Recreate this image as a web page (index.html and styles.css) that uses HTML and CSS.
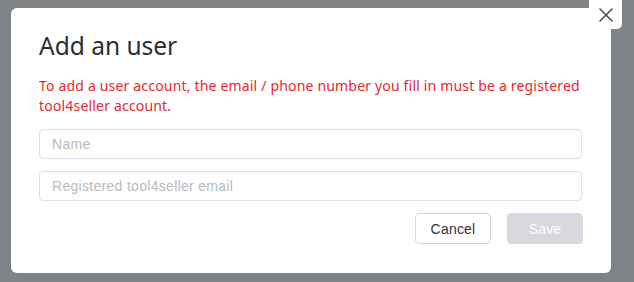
FILE: index.html
```html
<!DOCTYPE html>
<html lang="en">
  <head>
    <meta charset="UTF-8" />
    <meta name="viewport" content="width=device-width, initial-scale=1.0" />
    <title>Add an user</title>
    <link rel="stylesheet" href="styles.css">
  </head>
  <body>
    <div class="overlay">
      <div class="dialog">
        <button class="close-btn" aria-label="Close">
          <svg width="16" height="16" viewBox="0 0 16 16" fill="none" stroke="currentColor" stroke-width="1.6" stroke-linecap="round">
            <path d="M2 2L14 14"></path>
            <path d="M14 2L2 14"></path>
          </svg>
        </button>

        <h1 class="title">Add an user</h1>
        <p class="notice">
          To add a user account, the email / phone number you fill in must be a registered
          tool4seller account.
        </p>

        <form class="form">
          <input class="input" type="text" placeholder="Name" />
          <input class="input" type="text" placeholder="Registered tool4seller email" />

          <div class="actions">
            <button type="button" class="btn btn-cancel">Cancel</button>
            <button type="button" class="btn btn-save" disabled>Save</button>
          </div>
        </form>
      </div>
    </div>
  </body>
</html>
```

FILE: styles.css
```css
* {
  margin: 0;
  padding: 0;
  box-sizing: border-box;
  font-family: "Noto Sans", "Liberation Sans", sans-serif;
}

body {
  background-color: #808385;
  width: 634px;
  height: 282px;
  overflow: hidden;
}

.overlay {
  padding: 8px 23px 0 11px;
}

.dialog {
  position: relative;
  width: 600px;
  height: 265px;
  background-color: #fff;
  border-radius: 6px;
  padding: 23px 28px 0 28px;
}

.close-btn {
  position: absolute;
  top: -8px;
  right: -11px;
  width: 33px;
  height: 29px;
  background-color: #fff;
  border: none;
  border-radius: 0 0 5px 5px;
  color: #4a4d5c;
  display: flex;
  align-items: center;
  justify-content: center;
  cursor: pointer;
}

.title {
  font-size: 24.5px;
  font-weight: 400;
  color: #2a2d33;
  line-height: 30px;
  margin-bottom: 15px;
}

.notice {
  font-size: 14px;
  color: #e8262d;
  line-height: 20px;
  letter-spacing: 0.18px;
  margin-bottom: 13px;
}

.form {
  display: flex;
  flex-direction: column;
  gap: 12px;
  width: 543px;
}

.input {
  height: 30px;
  border: 1px solid #dcdfe6;
  border-radius: 4px;
  padding: 0 12px;
  font-size: 14px;
  letter-spacing: 0.3px;
  font-family: "Liberation Sans", sans-serif;
  color: #333;
  outline: none;
}

.input::placeholder {
  color: #b8bbc2;
}

.actions {
  display: flex;
  justify-content: flex-end;
  gap: 16px;
  margin-right: -1px;
}

.btn {
  width: 76px;
  height: 31px;
  border-radius: 4px;
  font-size: 14px;
  letter-spacing: 0.2px;
  font-family: "Liberation Sans", sans-serif;
  cursor: pointer;
}

.btn-cancel {
  background-color: #fff;
  border: 1px solid #d6d8de;
  color: #333;
}

.btn-save {
  background-color: #d8d9de;
  border: 1px solid #d8d9de;
  color: #fff;
}

.btn-save:disabled {
  cursor: not-allowed;
}
```
